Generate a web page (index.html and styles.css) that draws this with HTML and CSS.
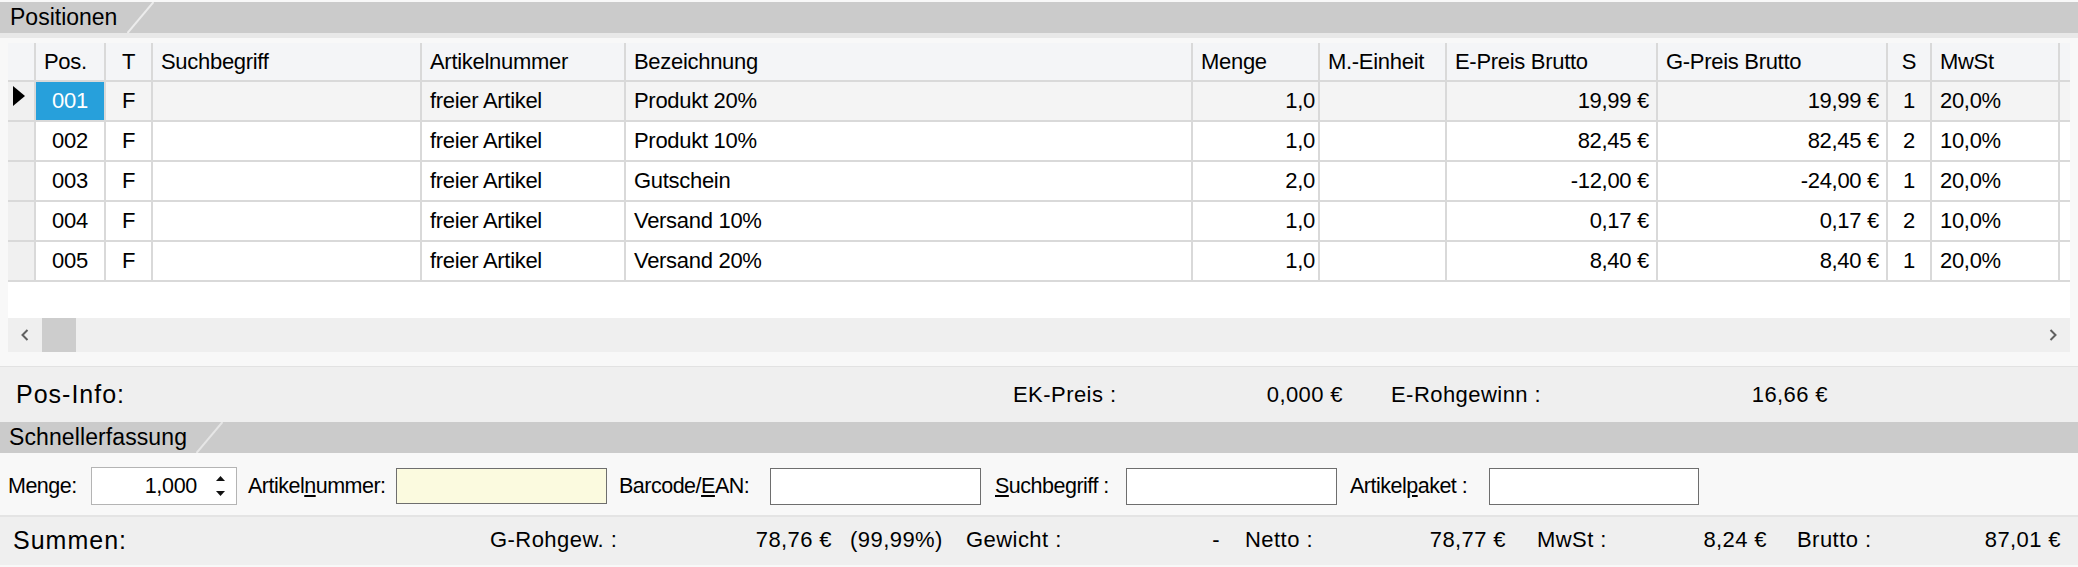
FILE: index.html
```html
<!DOCTYPE html>
<html lang="de">
<head>
<meta charset="utf-8">
<title>Positionen</title>
<link rel="stylesheet" href="styles.css">
</head>
<body>
<div class="app">
  <section class="positions">
    <div class="section-bar top">
      <span class="tab-label pos-tab">Positionen</span>
      <svg class="tab-edge" width="27" height="31" viewBox="0 0 27 31"><line x1="0.5" y1="31" x2="26.5" y2="0" stroke="#ececec" stroke-width="2"/></svg>
    </div>
    <div class="strip"></div>
    <div class="grid-wrap">
      <div class="row head">
        <div class="c-ind"></div>
        <div>Pos.</div>
        <div class="ctr">T</div>
        <div>Suchbegriff</div>
        <div>Artikelnummer</div>
        <div>Bezeichnung</div>
        <div>Menge</div>
        <div>M.-Einheit</div>
        <div>E-Preis Brutto</div>
        <div>G-Preis Brutto</div>
        <div class="ctr">S</div>
        <div>MwSt</div>
        <div class="fill"></div>
      </div>
      <div class="row sel">
        <div class="c-ind"><svg class="cur" width="12" height="20" viewBox="0 0 12 20"><polygon points="0,0 12,10 0,20" fill="#000"/></svg></div>
        <div class="ctr active">001</div>
        <div class="ctr">F</div>
        <div></div>
        <div>freier Artikel</div>
        <div>Produkt 20%</div>
        <div class="num qty">1,0</div>
        <div></div>
        <div class="num">19,99 €</div>
        <div class="num">19,99 €</div>
        <div class="ctr">1</div>
        <div>20,0%</div>
        <div class="fill"></div>
      </div>
      <div class="row">
        <div class="c-ind"></div>
        <div class="ctr">002</div>
        <div class="ctr">F</div>
        <div></div>
        <div>freier Artikel</div>
        <div>Produkt 10%</div>
        <div class="num qty">1,0</div>
        <div></div>
        <div class="num">82,45 €</div>
        <div class="num">82,45 €</div>
        <div class="ctr">2</div>
        <div>10,0%</div>
        <div class="fill"></div>
      </div>
      <div class="row">
        <div class="c-ind"></div>
        <div class="ctr">003</div>
        <div class="ctr">F</div>
        <div></div>
        <div>freier Artikel</div>
        <div>Gutschein</div>
        <div class="num qty">2,0</div>
        <div></div>
        <div class="num">-12,00 €</div>
        <div class="num">-24,00 €</div>
        <div class="ctr">1</div>
        <div>20,0%</div>
        <div class="fill"></div>
      </div>
      <div class="row">
        <div class="c-ind"></div>
        <div class="ctr">004</div>
        <div class="ctr">F</div>
        <div></div>
        <div>freier Artikel</div>
        <div>Versand 10%</div>
        <div class="num qty">1,0</div>
        <div></div>
        <div class="num">0,17 €</div>
        <div class="num">0,17 €</div>
        <div class="ctr">2</div>
        <div>10,0%</div>
        <div class="fill"></div>
      </div>
      <div class="row">
        <div class="c-ind"></div>
        <div class="ctr">005</div>
        <div class="ctr">F</div>
        <div></div>
        <div>freier Artikel</div>
        <div>Versand 20%</div>
        <div class="num qty">1,0</div>
        <div></div>
        <div class="num">8,40 €</div>
        <div class="num">8,40 €</div>
        <div class="ctr">1</div>
        <div>20,0%</div>
        <div class="fill"></div>
      </div>
      <div class="blank"></div>
      <div class="hscroll">
        <div class="sbtn"><svg width="8" height="12" viewBox="0 0 8 12"><polyline points="6.5,1 1.5,6 6.5,11" fill="none" stroke="#606060" stroke-width="2"/></svg></div>
        <div class="thumb"></div>
        <div class="track"></div>
        <div class="sbtn"><svg width="8" height="12" viewBox="0 0 8 12"><polyline points="1.5,1 6.5,6 1.5,11" fill="none" stroke="#606060" stroke-width="2"/></svg></div>
      </div>
    </div>
    <div class="after-grid"></div>
  </section>

  <div class="posinfo">
    <div class="big">Pos-Info:</div>
    <div class="lbl">EK-Preis :</div>
    <div class="val">0,000 €</div>
    <div class="lbl pad48">E-Rohgewinn :</div>
    <div class="val">16,66 €</div>
  </div>

  <div class="section-bar">
    <span class="tab-label quick-tab">Schnellerfassung</span>
    <svg class="tab-edge" width="27" height="31" viewBox="0 0 27 31"><line x1="0.5" y1="31" x2="26.5" y2="0" stroke="#e6e6e6" stroke-width="2"/></svg>
  </div>

  <div class="quick">
    <span class="qlbl w-menge">Menge:</span>
    <div class="spin">
      <span>1,000</span>
      <svg width="9" height="20" viewBox="0 0 9 20"><polygon points="4.5,0 9,5 0,5" fill="#111"/><polygon points="0,15 9,15 4.5,20" fill="#111"/></svg>
    </div>
    <span class="qlbl w-art">Artikel<u>n</u>ummer:</span>
    <div class="field yellow"></div>
    <span class="qlbl w-ean">Barcode/<u>E</u>AN:</span>
    <div class="field"></div>
    <span class="qlbl w-such"><u>S</u>uchbegriff :</span>
    <div class="field"></div>
    <span class="qlbl w-paket">Artikel<u>p</u>aket :</span>
    <div class="field last"></div>
  </div>

  <div class="sums">
    <div class="big">Summen:</div>
    <div class="lbl">G-Rohgew. :</div>
    <div class="val">78,76 €</div>
    <div class="lbl p18">(99,99%)</div>
    <div class="lbl">Gewicht :</div>
    <div class="val">-</div>
    <div class="lbl p25">Netto :</div>
    <div class="val">78,77 €</div>
    <div class="lbl p31">MwSt :</div>
    <div class="val">8,24 €</div>
    <div class="lbl p30">Brutto :</div>
    <div class="val">87,01 €</div>
  </div>
</div>
</body>
</html>
```

FILE: styles.css
```css
* { box-sizing: border-box; }
html, body { margin: 0; padding: 0; }
body {
  width: 2078px;
  height: 567px;
  overflow: hidden;
  background: #f8f8f8;
  font-family: "Liberation Sans", Arial, sans-serif;
  color: #000;
}
.app { display: flex; flex-direction: column; }

/* section title bars */
.section-bar {
  height: 31px;
  background: #cbcbcb;
  display: flex;
  align-items: center;
}
.section-bar.top { margin-top: 2px; }
.tab-label {
  font-size: 23px;
  white-space: nowrap;
  color: #000;
}
.pos-tab { width: 127px; padding-left: 10px; }
.quick-tab { width: 196px; padding-left: 9px; letter-spacing: 0.1px; }
.tab-edge { display: block; align-self: stretch; }

.strip { height: 5px; background: #e8e8e8; }

/* grid */
.grid-wrap { margin: 5px 8px 0; width: 2062px; }
.row {
  display: grid;
  grid-template-columns: 28px 70px 47px 269px 204px 567px 127px 127px 211px 230px 44px 128px 10px;
  height: 40px;
  background: #fff;
}
.row > div {
  border-right: 2px solid #d9d9d9;
  border-bottom: 2px solid #d9d9d9;
  display: flex;
  align-items: center;
  padding: 0 8px;
  font-size: 22px;
  letter-spacing: -0.3px;
  white-space: nowrap;
  overflow: hidden;
}
.row > div.fill { border-right: none; padding: 0; }
.row.head { height: 39px; background: #f4f5f7; }
.row.sel { background: #f4f4f4; }
.row > div.c-ind { background: #f0f0f0; padding: 0; justify-content: center; }
.row.head > div.c-ind { background: #f4f5f7; }
.row > div.ctr { justify-content: center; padding: 0; }
.row > div.num { justify-content: flex-end; padding-right: 7px; }
.row > div.qty { padding-right: 3px; }
.row > div.active { background: #27a0db; color: #fff; }
.cur { display: block; margin: -10px 0 0 -4px; }

.blank { height: 36px; background: #fff; }
.hscroll { height: 34px; background: #efefef; display: flex; }
.sbtn { width: 34px; display: flex; align-items: center; justify-content: center; }
.sbtn svg { display: block; }
.thumb { width: 34px; background: #cdcdcd; }
.track { flex: 1; }

.after-grid { height: 14px; }

/* pos info */
.posinfo {
  border-top: 1px solid #e2e2e2;
  height: 56px;
  background: #efefef;
  display: grid;
  grid-template-columns: 997px 187px 143px 248px 237px;
  align-items: center;
  padding-left: 16px;
  white-space: nowrap;
}
.big { font-size: 25px; letter-spacing: 1px; }
.lbl { font-size: 22px; letter-spacing: 0.45px; }
.val { font-size: 22px; letter-spacing: 0.4px; text-align: right; }
.pad48 { padding-left: 48px; }

/* quick entry */
.quick {
  height: 62px;
  padding: 4px 0 0 8px;
  background: #f8f8f8;
  display: flex;
  align-items: center;
  white-space: nowrap;
}
.qlbl { font-size: 21.5px; letter-spacing: -0.5px; }
.w-menge { width: 83px; }
.w-art { width: 148px; margin-left: 11px; }
.w-ean { width: 151px; margin-left: 12px; }
.w-such { width: 131px; margin-left: 14px; }
.w-paket { width: 139px; margin-left: 13px; }
.spin {
  width: 146px;
  height: 38px;
  background: #fff;
  border: 1px solid #b4b4b4;
  display: flex;
  align-items: center;
  justify-content: flex-end;
  padding-right: 11px;
  font-size: 21.5px;
  letter-spacing: -0.3px;
}
.spin svg { display: block; margin-left: 19px; }
.field {
  width: 211px;
  height: 37px;
  background: #fff;
  border: 1px solid #6e6e6e;
}
.field.last { width: 210px; }
.field.yellow { background: #fbfadf; height: 36px; }

/* sums */
.sums {
  border-top: 2px solid #e4e4e4;
  height: 50px;
  padding: 0 0 2px 13px;
  background: #efefef;
  display: grid;
  grid-template-columns: 477px 150px 192px 134px 134px 120px 140px 146px 134px 127px 133px 161px;
  align-items: center;
  white-space: nowrap;
}
.p18 { padding-left: 18px; }
.p25 { padding-left: 25px; }
.p31 { padding-left: 31px; }
.p30 { padding-left: 30px; }
```
